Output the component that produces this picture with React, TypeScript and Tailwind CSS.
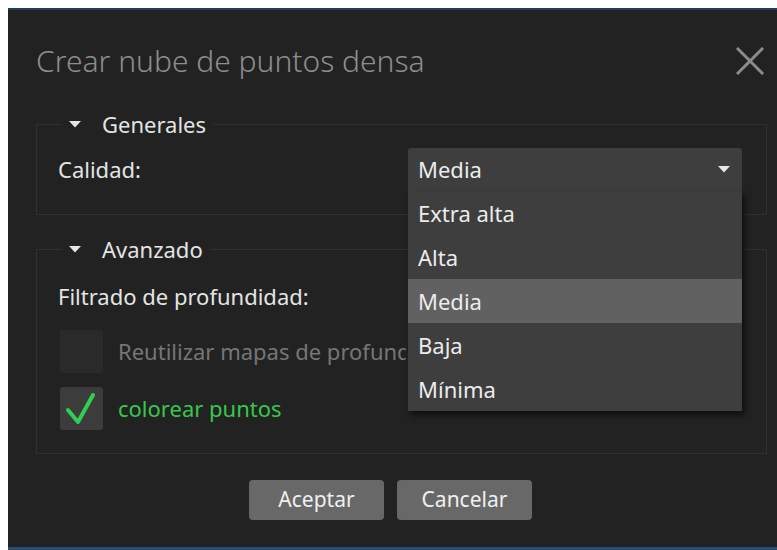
import { useState } from "react";

const options = ["Extra alta", "Alta", "Media", "Baja", "Mínima"];

function CloseIcon() {
  return (
    <svg width="28" height="28" viewBox="0 0 28 28" className="shrink-0">
      <path d="M2 2 L26 26 M26 2 L2 26" stroke="#8c8c8c" strokeWidth="3" strokeLinecap="square" />
    </svg>
  );
}

function Caret({ className }: { className?: string }) {
  return (
    <svg width="12" height="7" viewBox="0 0 12 7" className={className}>
      <path d="M0 0 H12 L6 6.5 Z" fill="#e6e6e6" />
    </svg>
  );
}

function Section({ title, children }: { title: string; children: React.ReactNode }) {
  return (
    <fieldset className="border border-[#303030] ml-[28px] mr-[10px]">
      <legend className="ml-[25px] px-[7px] flex items-center gap-[21px] leading-[26px] text-[#e4e4e4]">
        <Caret />
        <span>{title}</span>
      </legend>
      {children}
    </fieldset>
  );
}

function QualitySelect() {
  const [value, setValue] = useState("Media");
  return (
    <div className="relative w-[334px]">
      <div className="h-[43px] bg-[#3e3e3e] rounded-t-[3px] flex items-center justify-between pl-[10px] pr-[10px] text-[#ececec]">
        <span>{value}</span>
        <Caret className="mr-[2px]" />
      </div>
      <ul className="absolute left-0 top-full w-full bg-[#3e3e3e] shadow-[3px_4px_6px_rgba(0,0,0,0.6)] z-10">
        {options.map((o) => (
          <li
            key={o}
            onClick={() => setValue(o)}
            className={
              "h-[44px] flex items-center pl-[10px] text-[#ececec] " +
              (o === "Media" ? "bg-[#616161]" : "")
            }
          >
            {o}
          </li>
        ))}
      </ul>
    </div>
  );
}

function Check({ checked }: { checked: boolean }) {
  return (
    <div
      className={
        "w-[43px] h-[43px] rounded-[3px] flex items-center justify-center shrink-0 " +
        (checked ? "bg-[#3c3c3c]" : "bg-[#2a2a2a]")
      }
    >
      {checked && (
        <svg width="43" height="43" viewBox="0 0 43 43">
          <path d="M8 23 L18 35 L33 8" fill="none" stroke="#2fcf52" strokeWidth="4" strokeLinecap="round" strokeLinejoin="round" />
        </svg>
      )}
    </div>
  );
}

export default function App() {
  return (
    <div className="w-[777px] h-[550px] bg-white pl-[8px] pt-[8px] overflow-hidden" style={{ fontFamily: '"Noto Sans", "Open Sans", sans-serif' }}>
      <div className="h-full flex flex-col bg-[#222222] border-t-2 border-t-[#1f3d5c] border-b-[3px] border-b-[#284d73] text-[22px]">
        <div className="mt-[36px] h-[30px] flex items-center justify-between pl-[28px] pr-[13px]">
          <span className="text-[30px] leading-[30px] font-light text-[#8d8d8d]">Crear nube de puntos densa</span>
          <CloseIcon />
        </div>

        <div className="mt-[35px]">
          <Section title="Generales">
            <div className="flex items-start justify-between pl-[21px] pr-[24px] pt-[11px] pb-[23px]">
              <span className="leading-[43px] text-[#e4e4e4]">Calidad:</span>
              <QualitySelect />
            </div>
          </Section>
        </div>

        <div className="mt-[21px]">
          <Section title="Avanzado">
            <div className="flex flex-col pl-[21px] pt-[21px] pb-[23px]">
              <span className="leading-[26px] text-[#e4e4e4]">Filtrado de profundidad:</span>
              <div className="mt-[21px] ml-[2px] flex items-center gap-[15px]">
                <Check checked={false} />
                <span className="w-[288px] overflow-hidden text-[#767676] whitespace-nowrap">Reutilizar mapas de profundidad</span>
              </div>
              <div className="mt-[14px] ml-[2px] flex items-center gap-[15px]">
                <Check checked={true} />
                <span className="text-[#36c84c]">colorear puntos</span>
              </div>
            </div>
          </Section>
        </div>

        <div className="mt-[26px] flex justify-center gap-[13px] pr-[4px]">
          <button className="w-[135px] h-[40px] rounded-[4px] bg-[#686868] text-[21px] text-[#f0f0f0]">Aceptar</button>
          <button className="w-[135px] h-[40px] rounded-[4px] bg-[#686868] text-[21px] text-[#f0f0f0]">Cancelar</button>
        </div>
      </div>
    </div>
  );
}
